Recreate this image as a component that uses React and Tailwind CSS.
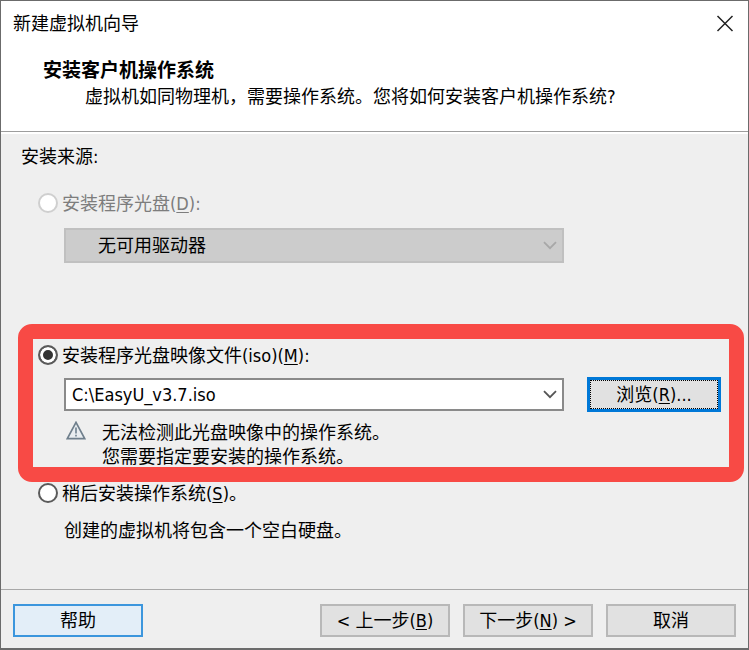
import React, { useState } from "react";

const Key = ({ children }) => (
  <>
    (<span className="underline underline-offset-2">{children}</span>)
  </>
);

const Chevron = ({ className }) => (
  <svg className={className} width="14" height="9" viewBox="0 0 14 9" fill="none" aria-hidden="true">
    <path d="M1 1.2 L7 7.2 L13 1.2" stroke="currentColor" strokeWidth="1.8" />
  </svg>
);

const WarningIcon = () => (
  <svg width="20" height="19" viewBox="0 0 20 19" fill="none" aria-hidden="true">
    <path d="M10 1.4 L18.7 17.6 H1.3 Z" fill="#e9edf0" stroke="#6f7f8c" strokeWidth="1.7" />
    <path d="M10 6.5 V12.5 M10 13.8 V15.6" stroke="#8796a2" strokeWidth="2" />
  </svg>
);

const Radio = ({ id, value, source, onChange, disabled, children }) => (
  <div className="flex items-center gap-1 h-6">
    <input
      id={id}
      type="radio"
      name="source"
      value={value}
      checked={source === value}
      onChange={() => onChange(value)}
      disabled={disabled}
      className="peer appearance-none shrink-0 w-5 h-5 rounded-full border-2 border-[#5a5a5a] bg-white checked:bg-[#333] checked:shadow-[inset_0_0_0_3px_white] disabled:border-[#cfcfcf]"
    />
    <label htmlFor={id} className="pt-px peer-disabled:text-[#7d7d7d]">
      {children}
    </label>
  </div>
);

const FooterButton = ({ children }) => (
  <button className="w-[130px] h-[33px] pt-px border-2 border-[#b8b8b8] bg-[#e1e1e1] whitespace-pre">
    {children}
  </button>
);

const App = () => {
  const [source, setSource] = useState("iso");
  const [path, setPath] = useState("C:\\EasyU_v3.7.iso");

  return (
    <div className="min-h-screen flex flex-col bg-[#efefef] border border-b-2 border-[#6b6b6b] font-['DejaVu_Sans_Condensed','Noto_Sans_CJK_SC',sans-serif] text-lg leading-6 text-black">
      {/* Title and heading */}
      <header className="bg-white border-b border-[#9d9d9d] pt-[11px] pb-[22px] pl-3 pr-[14px]">
        <div className="flex items-center justify-between h-6">
          <span>新建虚拟机向导</span>
          <button aria-label="关闭">
            <svg width="18" height="18" viewBox="0 0 18 18" fill="none">
              <path d="M1.5 1 L16.5 16 M16.5 1 L1.5 16" stroke="#222" strokeWidth="1.5" />
            </svg>
          </button>
        </div>
        <h1 className="mt-[22px] ml-[30px] text-[19px] leading-6 font-bold">安装客户机操作系统</h1>
        <p className="mt-[3px] ml-[72px]">虚拟机如同物理机，需要操作系统。您将如何安装客户机操作系统?</p>
      </header>

      <main className="grow border-t-2 border-white pt-[11px]">
        <p className="pl-5">安装来源:</p>

        {/* Physical disc */}
        <div className="mt-[22px] pl-[37px] pr-[184px]">
          <Radio id="disc" value="disc" source={source} onChange={setSource} disabled>
            安装程序光盘<Key>D</Key>:
          </Radio>
          <div className="relative mt-[13px] ml-[26px]">
            <select
              disabled
              aria-label="驱动器"
              className="appearance-none block w-full h-[35px] pt-px pl-8 border-2 border-[#c0c0c0] bg-[#cccccc] text-black opacity-100"
            >
              <option>无可用驱动器</option>
            </select>
            <Chevron className="absolute right-[7px] top-[13px] text-[#a8a8a8] pointer-events-none" />
          </div>
        </div>

        {/* ISO image */}
        <section className="mt-[61px] ml-[17px] mr-1 border-[15px] border-[#f84a45] rounded-[14px] pt-1 pl-[5px] pr-2">
          <Radio id="iso" value="iso" source={source} onChange={setSource}>
            安装程序光盘映像文件(iso)<Key>M</Key>:
          </Radio>
          <div className="flex items-center gap-[23px] mt-[10px] ml-[26px]">
            <div className="flex items-center grow h-[33px] border-2 border-[#8a8a8a] bg-white">
              <input
                aria-label="映像文件"
                value={path}
                onChange={(e) => setPath(e.target.value)}
                className="grow min-w-0 pl-[6px] outline-none"
              />
              <button aria-label="展开" className="px-[5px]">
                <Chevron className="text-[#555]" />
              </button>
            </div>
            <button className="w-[134px] h-[35px] border-[3px] border-[#0078d7] bg-[#e1e1e1]">
              <span className="flex items-center justify-center h-full pt-px border border-dotted border-black">
                浏览<Key>R</Key>...
              </span>
            </button>
          </div>
          <div className="flex gap-4 mt-[9px] ml-7">
            <WarningIcon />
            <p className="-mb-[2px]">
              无法检测此光盘映像中的操作系统。
              <br />
              您需要指定要安装的操作系统。
            </p>
          </div>
        </section>

        {/* Install later */}
        <div className="-mt-px pl-[37px]">
          <Radio id="later" value="later" source={source} onChange={setSource}>
            稍后安装操作系统<Key>S</Key>。
          </Radio>
          <p className="mt-[14px] ml-[26px]">创建的虚拟机将包含一个空白硬盘。</p>
        </div>
      </main>

      <footer className="flex items-center border-t border-[#a8a8a8] pt-[14px] pb-[11px] pl-3 pr-3 gap-[13px]">
        <button className="w-[130px] h-[33px] pt-px mr-auto border-2 border-[#3c96dd] bg-[#e3eef8]">帮助</button>
        <FooterButton>
          {"< 上一步"}
          <Key>B</Key>
        </FooterButton>
        <FooterButton>
          下一步<Key>N</Key>
          {" >"}
        </FooterButton>
        <FooterButton>取消</FooterButton>
      </footer>
    </div>
  );
};

export default App;
